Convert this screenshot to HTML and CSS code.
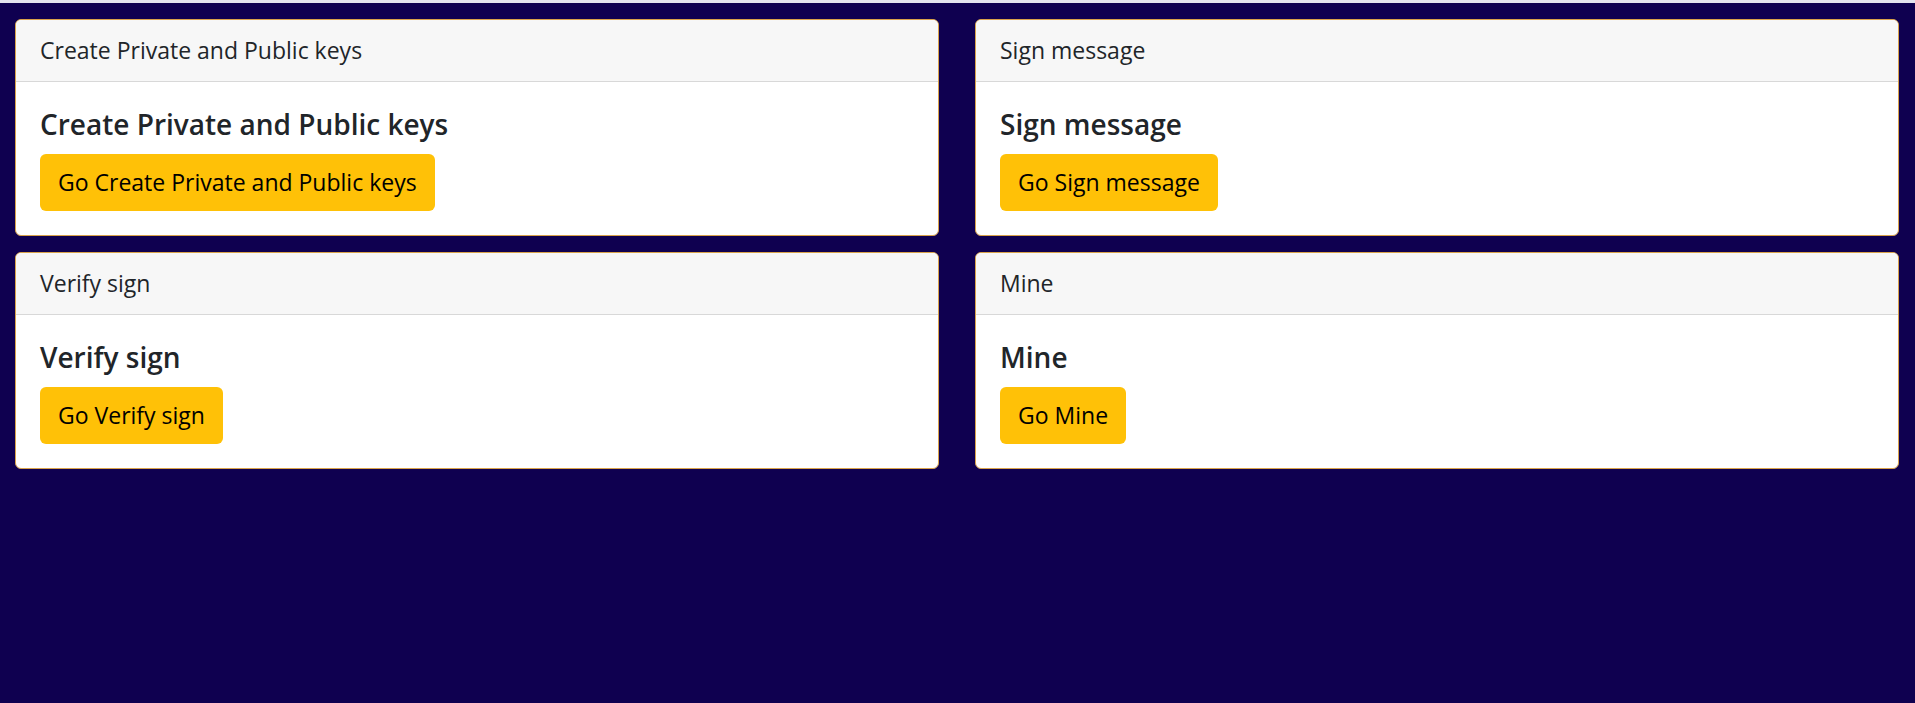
FILE: index.html
```html
<!DOCTYPE html>
<html lang="en">
<head>
<meta charset="utf-8">
<title>Blockchain</title>
<link rel="stylesheet" href="styles.css">
</head>
<body>
<div class="topline"></div>
<main class="grid">
  <section class="card">
    <div class="card-header">Create Private and Public keys</div>
    <div class="card-body">
      <h5 class="card-title">Create Private and Public keys</h5>
      <a class="btn" href="#">Go Create Private and Public keys</a>
    </div>
  </section>
  <section class="card">
    <div class="card-header">Sign message</div>
    <div class="card-body">
      <h5 class="card-title">Sign message</h5>
      <a class="btn" href="#">Go Sign message</a>
    </div>
  </section>
  <section class="card">
    <div class="card-header">Verify sign</div>
    <div class="card-body">
      <h5 class="card-title">Verify sign</h5>
      <a class="btn" href="#">Go Verify sign</a>
    </div>
  </section>
  <section class="card">
    <div class="card-header">Mine</div>
    <div class="card-body">
      <h5 class="card-title">Mine</h5>
      <a class="btn" href="#">Go Mine</a>
    </div>
  </section>
</main>
</body>
</html>
```
FILE: styles.css
```css
html, body {
  margin: 0;
  padding: 0;
}
body {
  background: #0f0050;
  font-family: "Open Sans", "Noto Sans", sans-serif;
  color: #212529;
  min-height: 703px;
}
.topline {
  height: 3px;
  background: #e4e4ee;
}
.grid {
  display: grid;
  grid-template-columns: 1fr 1fr;
  column-gap: 36px;
  row-gap: 16px;
  padding: 16px 16px 0 15px;
}
.card {
  background: #fff;
  border: 1px solid #d9a24a;
  border-radius: 6px;
  overflow: hidden;
}
.card-header {
  background: #f7f7f7;
  border-bottom: 1px solid #d8d8d8;
  padding: 12px 24px;
  font-size: 23px;
  line-height: 37px;
  height: 37px;
}
.card-body {
  padding: 24px;
}
.card-title {
  margin: 0 0 12px;
  font-size: 28px;
  font-weight: 600;
  line-height: 36px;
  height: 36px;
}
.btn {
  display: inline-block;
  background: #ffc107;
  color: #000;
  text-decoration: none;
  border-radius: 6px;
  padding: 10px 18px;
  font-size: 23px;
  line-height: 37px;
  height: 37px;
}
```
